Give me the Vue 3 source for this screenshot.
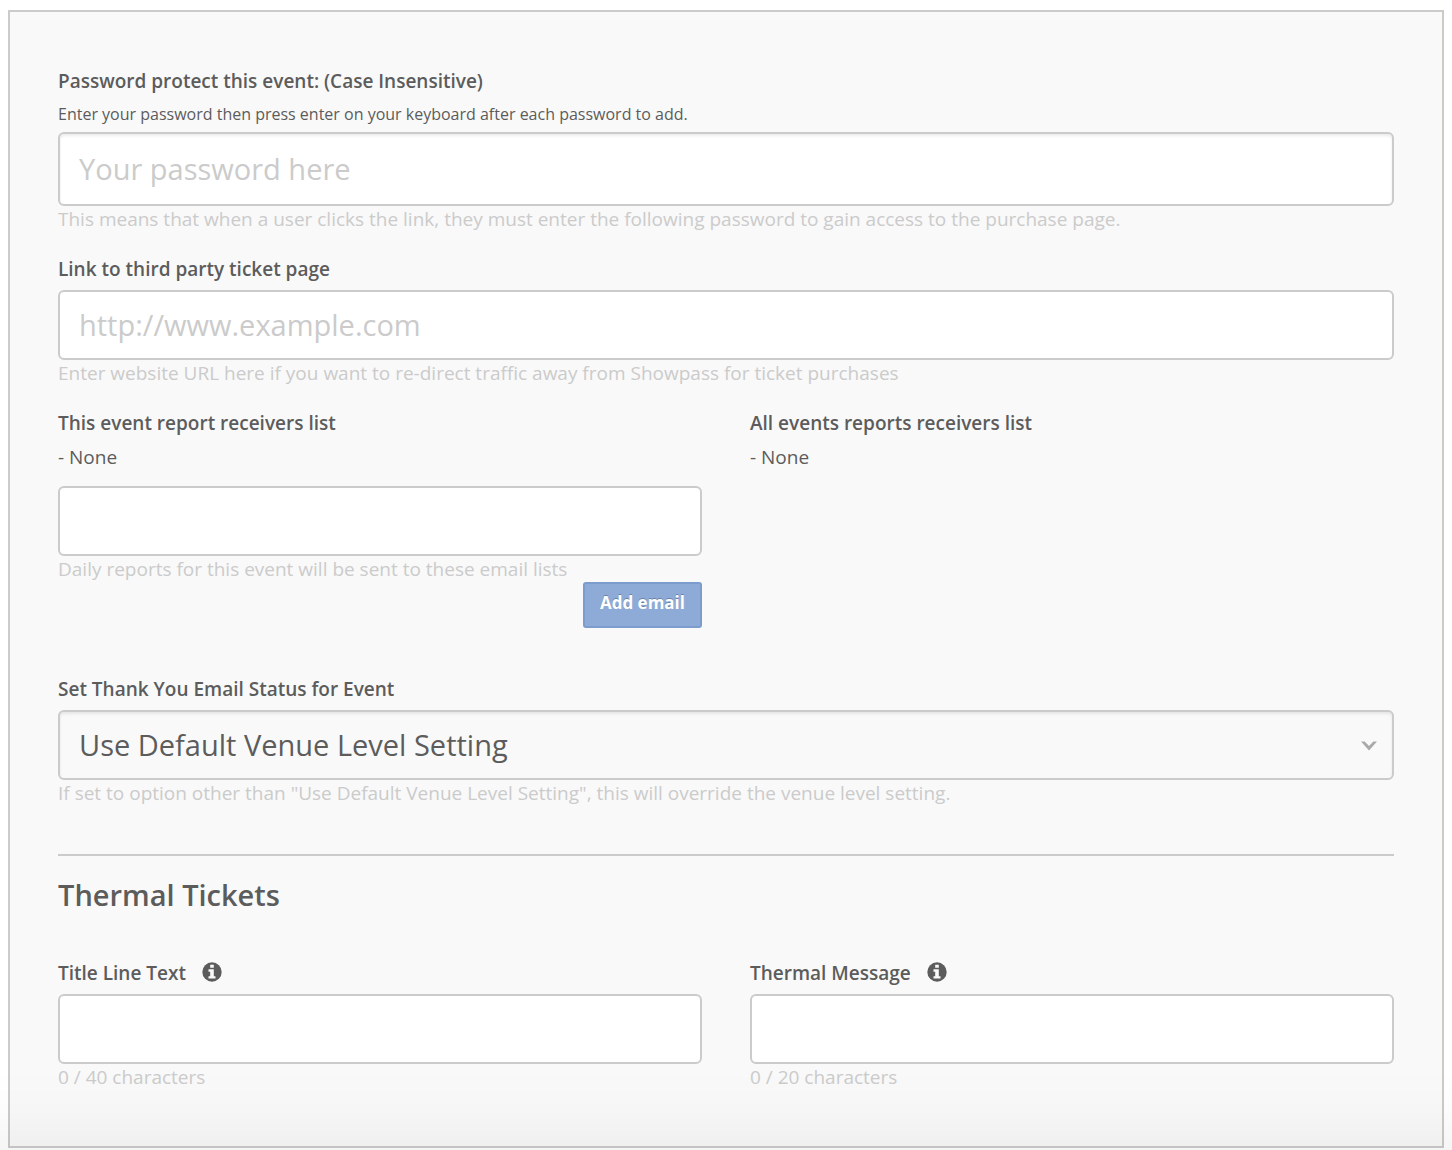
<script setup>
import { ref } from 'vue'

const password = ref('')
const link = ref('')
const email = ref('')
const receivers = ref([])
const status = ref('default')
const titleLine = ref('')
const message = ref('')

function addEmail() {
  if (email.value) {
    receivers.value.push(email.value)
    email.value = ''
  }
}
</script>

<template>
  <main class="page">
    <form class="panel" @submit.prevent>
      <div class="field">
        <label for="password">Password protect this event: (Case Insensitive)</label>
        <p class="hint">Enter your password then press enter on your keyboard after each password to add.</p>
        <input id="password" v-model="password" class="control tall shaded" type="text" placeholder="Your password here" />
        <p class="help">This means that when a user clicks the link, they must enter the following password to gain access to the purchase page.</p>
      </div>

      <div class="field">
        <label for="link">Link to third party ticket page</label>
        <input id="link" v-model="link" class="control" type="text" placeholder="http://www.example.com" />
        <p class="help">Enter website URL here if you want to re-direct traffic away from Showpass for ticket purchases</p>
      </div>

      <div class="columns reports">
        <div>
          <label for="email">This event report receivers list</label>
          <p v-if="!receivers.length" class="list">- None</p>
          <p v-for="r in receivers" :key="r" class="list">- {{ r }}</p>
          <input id="email" v-model="email" class="control" type="text" />
          <p class="help">Daily reports for this event will be sent to these email lists</p>
          <div class="actions">
            <button type="button" class="add" @click="addEmail">Add email</button>
          </div>
        </div>
        <div>
          <h3 class="label">All events reports receivers list</h3>
          <p class="list">- None</p>
        </div>
      </div>

      <div class="status">
        <label for="status">Set Thank You Email Status for Event</label>
        <div class="select">
          <select id="status" v-model="status" class="control shaded">
            <option value="default">Use Default Venue Level Setting</option>
            <option value="on">Enabled</option>
            <option value="off">Disabled</option>
          </select>
          <svg class="chevron" viewBox="0 0 16 10" width="16" height="10" aria-hidden="true">
            <path d="M0 0.5H3.6L8 5 12.4 0.5H16L8 9.5Z" fill="#a9a9a9" />
          </svg>
        </div>
        <p class="help">If set to option other than "Use Default Venue Level Setting", this will override the venue level setting.</p>
      </div>

      <section class="thermal">
        <h2>Thermal Tickets</h2>
        <div class="columns">
          <div>
            <label for="title-line">Title Line Text
              <svg class="info" viewBox="0 0 20 20" width="20" height="20" aria-hidden="true">
                <circle cx="10" cy="10" r="9.7" fill="#5c5c5c" />
                <path d="M8.2 2.8h3.600v3H8.200zM6.500 7.300h5.300v6.900h1.700v2.400h-7v-2.400h1.700V9.700H6.500z" fill="#f9f9f9" />
              </svg>
            </label>
            <input id="title-line" v-model="titleLine" class="control" type="text" maxlength="40" />
            <p class="help">{{ titleLine.length }} / 40 characters</p>
          </div>
          <div>
            <label for="message">Thermal Message
              <svg class="info" viewBox="0 0 20 20" width="20" height="20" aria-hidden="true">
                <circle cx="10" cy="10" r="9.7" fill="#5c5c5c" />
                <path d="M8.2 2.8h3.600v3H8.200zM6.500 7.300h5.300v6.900h1.700v2.400h-7v-2.400h1.700V9.700H6.500z" fill="#f9f9f9" />
              </svg>
            </label>
            <input id="message" v-model="message" class="control" type="text" maxlength="20" />
            <p class="help">{{ message.length }} / 20 characters</p>
          </div>
        </div>
      </section>
    </form>
    <div class="fade"></div>
  </main>
</template>

<style>
body {
  background: #fff;
}
</style>

<style scoped>
* {
  box-sizing: border-box;
}

.page {
  padding: 10px 8px 2px;
  font-family: "Open Sans", "Noto Sans", sans-serif;
  font-size: 19px;
  line-height: 26px;
  color: #5c5c5c;
}

.panel {
  padding: 56px 48px;
  background: #f9f9f9;
  border: 2px solid #cbcbcb;
}

p,
h2,
h3 {
  margin: 0;
}

label,
.label {
  display: flex;
  align-items: center;
  gap: 16px;
  margin-bottom: 8px;
  font-size: 19px;
  font-weight: 600;
}

.info {
  margin-bottom: 2px;
}

.field {
  margin-bottom: 24px;
}

.hint {
  margin-bottom: 6px;
  font-size: 16px;
  line-height: 24px;
}

.help {
  color: #cbcbcb;
}

.control {
  display: block;
  width: 100%;
  height: 70px;
  padding: 0 19px 2px;
  font: inherit;
  font-size: 29px;
  line-height: 40px;
  color: #5c5c5c;
  background: #fff;
  border: 2px solid #cbcbcb;
  border-radius: 6px;
  outline: none;
}

.control::placeholder {
  color: #cbcbcb;
  opacity: 1;
}

.tall {
  height: 74px;
}

.shaded {
  box-shadow: inset 0 2px 3px rgba(0, 0, 0, 0.08);
}

.columns {
  display: grid;
  grid-template-columns: 1fr 1fr;
  gap: 48px;
}

.list + .control {
  margin-top: 16px;
}

.actions {
  display: flex;
  justify-content: flex-end;
}

.add {
  height: 46px;
  padding: 0 15px 4px;
  font: inherit;
  font-size: 17px;
  font-weight: 700;
  color: #fff;
  text-shadow: 0 -1px 0 rgba(0, 0, 0, 0.25);
  background: #8eaad7;
  border: 2px solid #7c9ccd;
  border-radius: 3px;
}

.status {
  margin-top: 48px;
}

.select {
  position: relative;
}

select.control {
  padding-bottom: 0;
  appearance: none;
  background: #f9f9f9;
}

.chevron {
  position: absolute;
  top: 31px;
  right: 17px;
  pointer-events: none;
}

.thermal {
  margin-top: 48px;
  padding-top: 19px;
  border-top: 2px solid #cbcbcb;
}

h2 {
  margin-bottom: 45px;
  font-size: 29px;
  font-weight: 600;
  line-height: 40px;
}

.fade {
  position: fixed;
  right: 0;
  bottom: 0;
  left: 0;
  height: 80px;
  pointer-events: none;
  background: linear-gradient(rgba(0, 0, 0, 0), rgba(0, 0, 0, 0.01) 50%, rgba(0, 0, 0, 0.04));
}
</style>
